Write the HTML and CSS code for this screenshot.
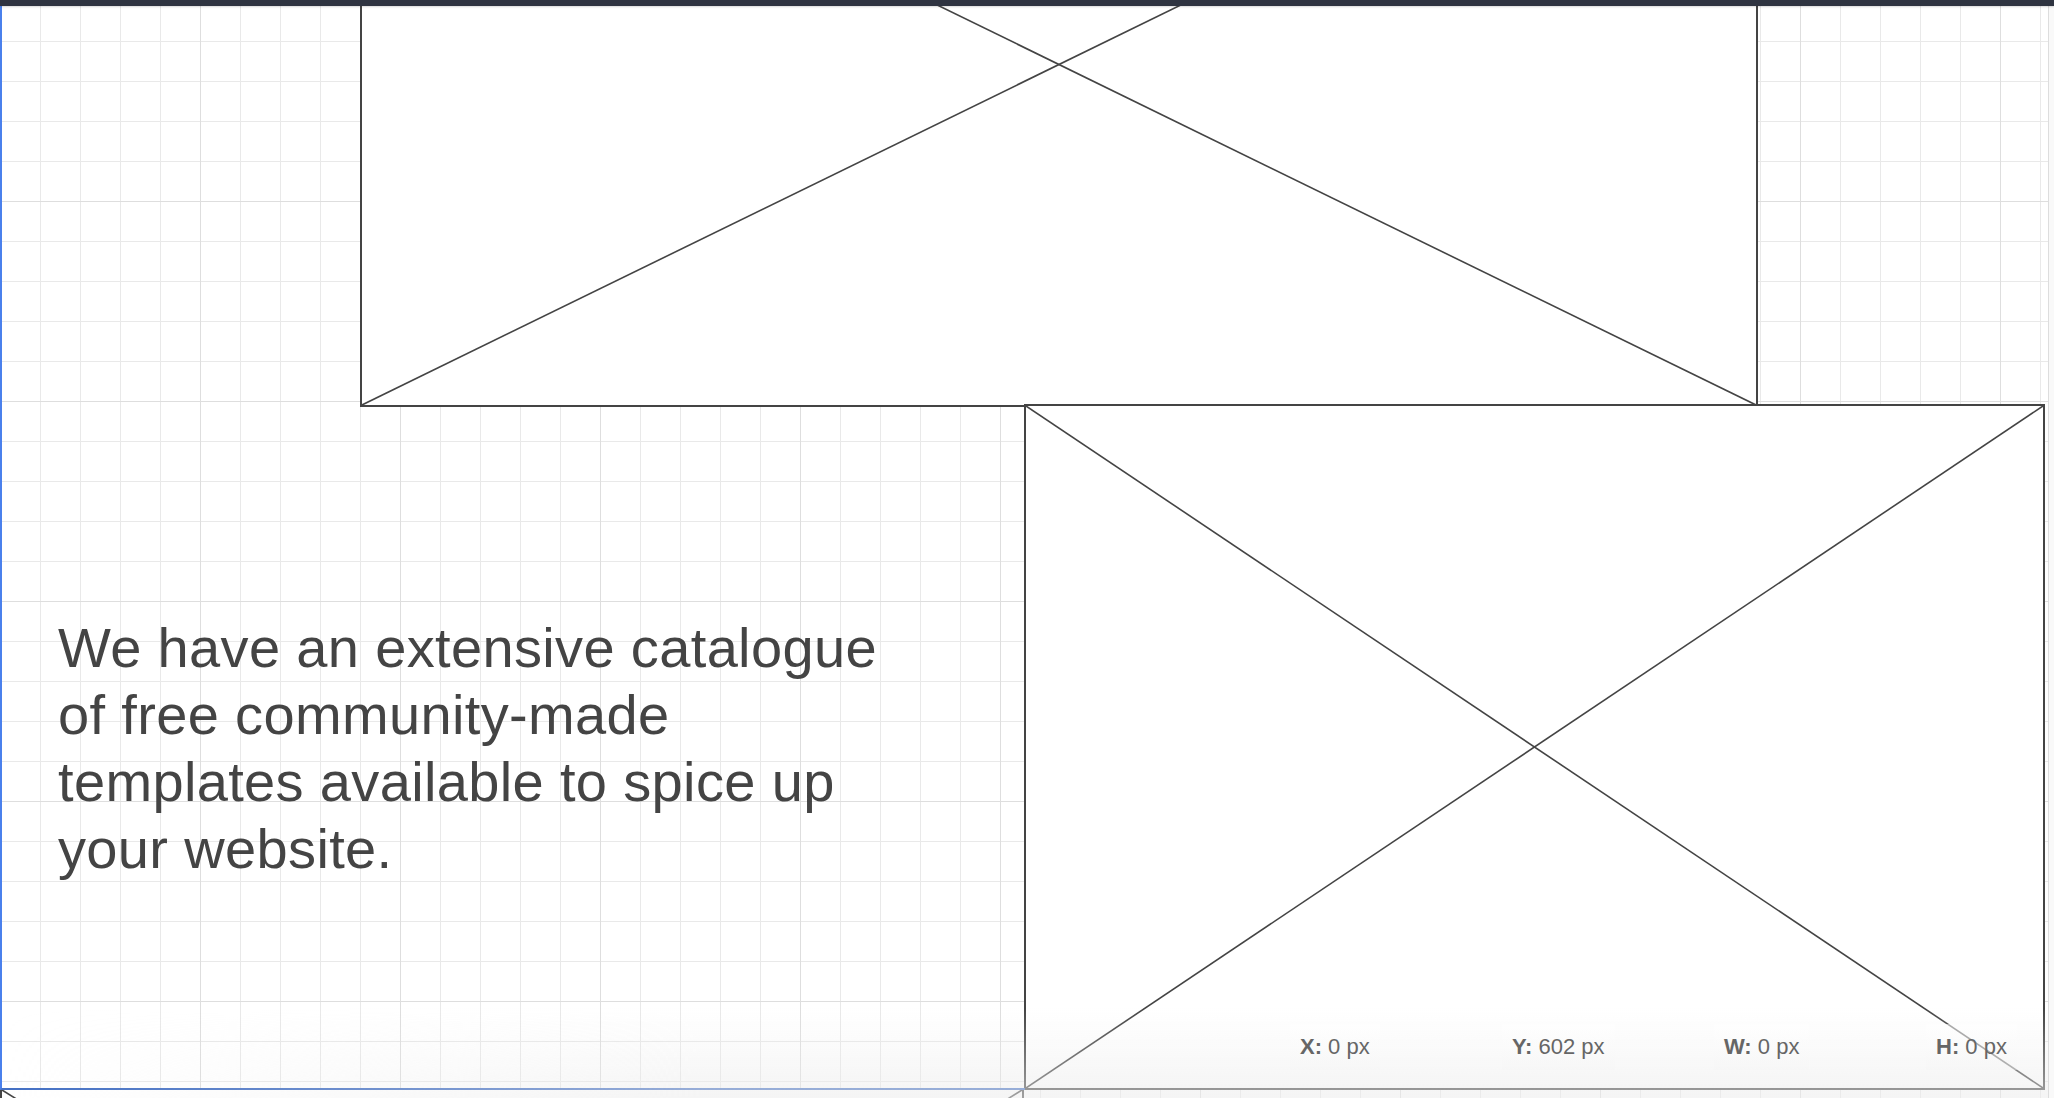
FILE: index.html
```html
<!DOCTYPE html>
<html lang="en">
<head>
    <meta charset="UTF-8">
    <title>Wireframe canvas</title>

    <link rel="stylesheet" href="styles.css">
</head>
<body>

    <!-- Barra superior del editor -->
    <header class="topbar"></header>

    <div class="workspace">
        <!-- Lienzo con cuadrícula: las figuras se colocan libremente -->
        <div class="canvas">

            <div class="shape shape-top">
                <svg class="cross">
                    <line x1="0" y1="0" x2="100%" y2="100%"></line>
                    <line x1="100%" y1="0" x2="0" y2="100%"></line>
                </svg>
            </div>

            <div class="shape shape-below">
                <svg class="cross">
                    <line x1="0" y1="0" x2="100%" y2="100%"></line>
                    <line x1="100%" y1="0" x2="0" y2="100%"></line>
                </svg>
            </div>

            <div class="shape shape-right">
                <svg class="cross">
                    <line x1="0" y1="0" x2="100%" y2="100%"></line>
                    <line x1="100%" y1="0" x2="0" y2="100%"></line>
                </svg>
            </div>

            <!-- Contorno de selección -->
            <div class="selection"></div>

            <p class="blurb">We have an extensive catalogue of free community-made templates available to spice up your website.</p>

            <!-- Degradado inferior y coordenadas -->
            <div class="fade"></div>
            <div class="statusbar">
                <span class="coord"><b>X:</b> 0 px</span>
                <span class="coord"><b>Y:</b> 602 px</span>
                <span class="coord"><b>W:</b> 0 px</span>
                <span class="coord"><b>H:</b> 0 px</span>
            </div>
        </div>

        <div class="gutter"></div>
    </div>

</body>
</html>
```

FILE: styles.css
```css
/* Página completa, sin márgenes */
html, body {
    height: 100%;
}

body {
    margin: 0;
    display: flex;
    flex-direction: column;
    overflow: hidden;
    font-family: "Liberation Sans", Arial, sans-serif;
    background: #ffffff;
}

/* Barra oscura superior */
.topbar {
    height: 6px;
    flex: none;
    background: #2f3441;
    box-shadow: 0 1px 2px rgba(0, 0, 0, 0.15);
    position: relative;
    z-index: 5;
}

.workspace {
    flex: 1;
    display: flex;
    min-height: 0;
}

/* Lienzo con cuadrícula menor (40px) y mayor (200px) */
.canvas {
    flex: 1;
    position: relative;
    overflow: hidden;
    background-color: #ffffff;
    background-image:
        linear-gradient(to right, #dedede 1px, transparent 1px),
        linear-gradient(to bottom, #dedede 1px, transparent 1px),
        linear-gradient(to right, #e9e9e9 1px, transparent 1px),
        linear-gradient(to bottom, #e9e9e9 1px, transparent 1px);
    background-size: 200px 200px, 200px 200px, 40px 40px, 40px 40px;
    background-position: 0 -5px;
}

/* Borde derecho tipo barra de desplazamiento */
.gutter {
    width: 5px;
    flex: none;
    border-left: 1px solid #dddddd;
    background: #f9f9f9;
}

/* Figuras de marcador de imagen */
.shape {
    position: absolute;
    box-sizing: border-box;
    border: 2px solid #444444;
    background: #ffffff;
}

.shape-top {
    left: 360px;
    top: -284px;
    width: 1398px;
    height: 685px;
}

.shape-right {
    left: 1024px;
    top: 398px;
    width: 1021px;
    height: 686px;
}

.shape-below {
    left: 0;
    top: 1082px;
    width: 1024px;
    height: 640px;
}

.cross {
    display: block;
    width: 100%;
    height: 100%;
}

.cross line {
    stroke: #444444;
    stroke-width: 1.6;
}

/* Selección azul */
.selection {
    position: absolute;
    left: 0;
    top: 0;
    width: 1025px;
    height: 1084px;
    box-sizing: border-box;
    border-left: 2px solid #4a80ec;
    border-bottom: 2px solid #4470c4;
}

/* Texto principal */
.blurb {
    position: absolute;
    left: 58px;
    top: 608px;
    width: 850px;
    margin: 0;
    font-size: 56px;
    line-height: 67px;
    letter-spacing: 0.35px;
    color: #444444;
}

.fade {
    position: absolute;
    left: 0;
    right: 0;
    bottom: 0;
    height: 90px;
    pointer-events: none;
    background: linear-gradient(to bottom, rgba(250, 250, 250, 0), rgba(236, 236, 236, 0.55));
    -webkit-mask-image: linear-gradient(to right, transparent 0, #000 700px);
    mask-image: linear-gradient(to right, transparent 0, #000 700px);
}

/* Coordenadas en la parte inferior */
.statusbar {
    position: absolute;
    left: 1290px;
    top: 1018px;
    display: grid;
    grid-template-columns: repeat(4, 212px);
    justify-items: start;
}

.coord {
    padding: 0 10px;
    font-size: 22px;
    line-height: 46px;
    color: #666666;
    background: linear-gradient(to bottom, rgba(255, 255, 255, 0.5), rgba(245, 245, 245, 0.4));
    white-space: nowrap;
}

.coord b {
    font-weight: bold;
}
```
